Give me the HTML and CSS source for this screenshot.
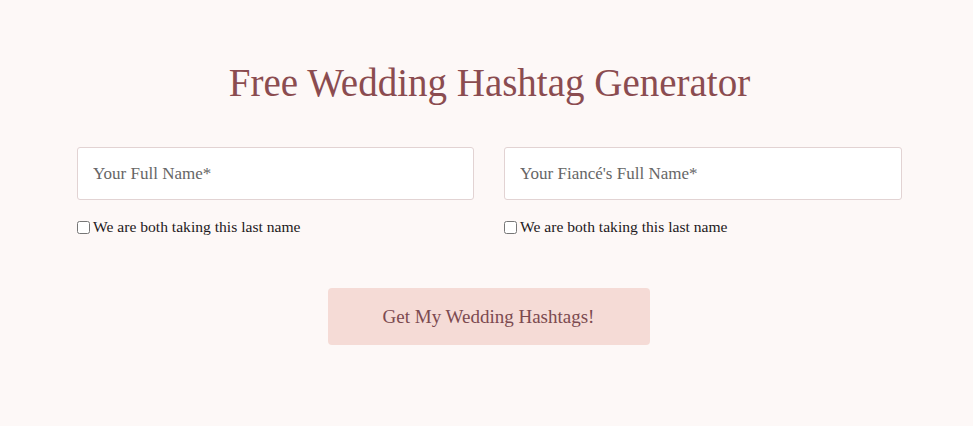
FILE: index.html
```html
<!DOCTYPE html>
<html lang="en">
<head>
<meta charset="utf-8">
<title>Free Wedding Hashtag Generator</title>
<link rel="stylesheet" href="styles.css">
</head>
<body>
<main class="wrap">
  <h1 class="title">Free Wedding Hashtag Generator</h1>
  <form class="form">
    <div class="fields">
      <div class="field">
        <input class="input" type="text" placeholder="Your Full Name*">
        <label class="check"><input type="checkbox"> We are both taking this last name</label>
      </div>
      <div class="field">
        <input class="input" type="text" placeholder="Your Fiancé's Full Name*">
        <label class="check"><input type="checkbox"> We are both taking this last name</label>
      </div>
    </div>
    <div class="actions">
      <button class="btn" type="button">Get My Wedding Hashtags!</button>
    </div>
  </form>
</main>
</body>
</html>
```
FILE: styles.css
```css
html, body {
  margin: 0;
  padding: 0;
  background: #fdf8f7;
}
body {
  font-family: "Liberation Serif", "Times New Roman", serif;
  color: #222;
}
.wrap {
  width: 825px;
  margin: 0 auto;
  padding: 57px 0 0 6px;
}
.title {
  margin: 0;
  text-align: center;
  font-weight: 400;
  font-size: 39px;
  line-height: 52px;
  color: #8b4c50;
}
.form {
  margin-top: 38px;
}
.fields {
  display: grid;
  grid-template-columns: 397px 398px;
  column-gap: 30px;
}
.field {
  display: flex;
  flex-direction: column;
}
.input {
  box-sizing: border-box;
  height: 53px;
  border: 1px solid #e2d3d3;
  border-radius: 3px;
  background: #fff;
  padding: 0 15px;
  font-family: inherit;
  font-size: 17px;
  color: #333;
  outline: none;
}
.input::placeholder {
  color: #666;
}
.check {
  margin-top: 18px;
  display: flex;
  align-items: center;
  gap: 3px;
  font-size: 15.6px;
  line-height: 18px;
  color: #1e1a22;
}
.check input {
  margin: 0;
  width: 13px;
  height: 13px;
}
.actions {
  display: flex;
  justify-content: center;
  margin-top: 52px;
  padding-right: 2px;
}
.btn {
  width: 322px;
  height: 57px;
  border: 0;
  border-radius: 4px;
  background: #f5dbd6;
  color: #7c4a50;
  font-family: inherit;
  font-size: 19px;
  cursor: pointer;
}
```
